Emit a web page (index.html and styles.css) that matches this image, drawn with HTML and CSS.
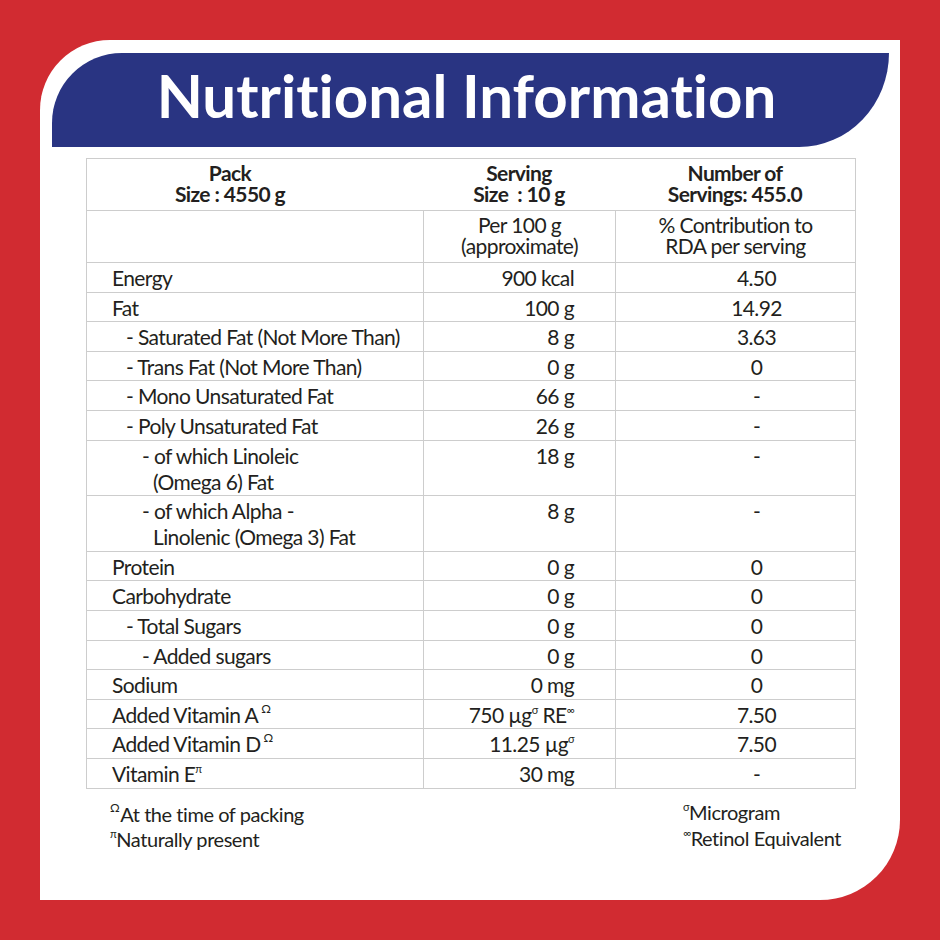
FILE: index.html
```html
<!DOCTYPE html>
<html lang="en">
<head>
<meta charset="utf-8">
<title>Nutritional Information</title>
<link rel="stylesheet" href="styles.css">
</head>
<body>
<div class="page">
  <div class="card">
    <div class="banner"><h1 class="title">Nutritional Information</h1></div>
    <div class="table">
      <div class="row head">
        <div class="cell c1 hc1">Pack<br>Size : 4550 g</div>
        <div class="cell c2 hc">Serving<br>Size&nbsp; : 10 g</div>
        <div class="cell c3 hc">Number of<br>Servings: 455.0</div>
      </div>
      <div class="row sub">
        <div class="cell c1"></div>
        <div class="cell c2 b hc">Per 100 g<br>(approximate)</div>
        <div class="cell c3 b hc">% Contribution to<br>RDA per serving</div>
      </div>
      <div class="row"><div class="cell c1 l0">Energy</div><div class="cell c2 b v">900 kcal</div><div class="cell c3 b p">4.50</div></div>
      <div class="row"><div class="cell c1 l0">Fat</div><div class="cell c2 b v">100 g</div><div class="cell c3 b p">14.92</div></div>
      <div class="row"><div class="cell c1 l1">- Saturated Fat (Not More Than)</div><div class="cell c2 b v">8 g</div><div class="cell c3 b p">3.63</div></div>
      <div class="row"><div class="cell c1 l1">- Trans Fat (Not More Than)</div><div class="cell c2 b v">0 g</div><div class="cell c3 b p">0</div></div>
      <div class="row"><div class="cell c1 l1">- Mono Unsaturated Fat</div><div class="cell c2 b v">66 g</div><div class="cell c3 b p">-</div></div>
      <div class="row"><div class="cell c1 l1">- Poly Unsaturated Fat</div><div class="cell c2 b v">26 g</div><div class="cell c3 b p">-</div></div>
      <div class="row"><div class="cell c1 l2">- of which Linoleic<br>(Omega 6) Fat</div><div class="cell c2 b v">18 g</div><div class="cell c3 b p">-</div></div>
      <div class="row"><div class="cell c1 l2">- of which Alpha -<br>Linolenic (Omega 3) Fat</div><div class="cell c2 b v">8 g</div><div class="cell c3 b p">-</div></div>
      <div class="row"><div class="cell c1 l0">Protein</div><div class="cell c2 b v">0 g</div><div class="cell c3 b p">0</div></div>
      <div class="row"><div class="cell c1 l0">Carbohydrate</div><div class="cell c2 b v">0 g</div><div class="cell c3 b p">0</div></div>
      <div class="row"><div class="cell c1 l1">- Total Sugars</div><div class="cell c2 b v">0 g</div><div class="cell c3 b p">0</div></div>
      <div class="row"><div class="cell c1 l2">- Added sugars</div><div class="cell c2 b v">0 g</div><div class="cell c3 b p">0</div></div>
      <div class="row"><div class="cell c1 l0">Sodium</div><div class="cell c2 b v">0 mg</div><div class="cell c3 b p">0</div></div>
      <div class="row"><div class="cell c1 l0">Added Vitamin A<sup class="om">Ω</sup></div><div class="cell c2 b v">750 µg<sup class="sm">σ</sup> RE<sup class="sm">∞</sup></div><div class="cell c3 b p">7.50</div></div>
      <div class="row"><div class="cell c1 l0">Added Vitamin D<sup class="om">Ω</sup></div><div class="cell c2 b v">11.25 µg<sup class="sm">σ</sup></div><div class="cell c3 b p">7.50</div></div>
      <div class="row last"><div class="cell c1 l0">Vitamin E<sup class="sm">π</sup></div><div class="cell c2 b v">30 mg</div><div class="cell c3 b p">-</div></div>
    </div>
    <div class="notes">
      <div class="note-left">
        <div><sup class="om">Ω</sup>At the time of packing</div>
        <div><sup class="sm">π</sup>Naturally present</div>
      </div>
      <div class="note-right">
        <div><sup class="sm">σ</sup>Microgram</div>
        <div><sup class="sm">∞</sup>Retinol Equivalent</div>
      </div>
    </div>
  </div>
</div>
</body>
</html>
```

FILE: styles.css
```css
html, body {
  margin: 0;
  padding: 0;
}
body {
  background: #d12b31;
  font-family: Lato, "Open Sans", sans-serif;
  color: #231f20;
  font-variant-ligatures: none;
}
.page {
  width: 940px;
  height: 940px;
  box-sizing: border-box;
  padding: 40px;
}
.card {
  width: 860px;
  height: 860px;
  background: #ffffff;
  border-radius: 70px 0 80px 0;
  overflow: hidden;
  padding-top: 13px;
  box-sizing: border-box;
}
.banner {
  margin: 0 11px 0 12px;
  height: 94px;
  background: #293482;
  border-radius: 70px 0 90px 0 / 70px 0 94px 0;
  display: flex;
  align-items: center;
  justify-content: center;
  padding-bottom: 10px;
  box-sizing: border-box;
}
.title {
  margin: 0;
  color: #ffffff;
  font-size: 60px;
  font-weight: 700;
  line-height: 72px;
  letter-spacing: 0;
  padding-right: 8px;
  font-variant-ligatures: none;
}
.table {
  margin: 11px 0 0 46px;
  width: 770px;
  box-sizing: border-box;
  border: 1px solid #cdcdcd;
  font-size: 21px;
}
.row {
  display: grid;
  grid-template-columns: 336px 192px 240px;
  border-bottom: 1px solid #cdcdcd;
}
.row.last {
  border-bottom: none;
}
.cell {
  box-sizing: border-box;
  line-height: 26px;
  padding: 2px 0 0.6px 0;
  letter-spacing: -0.6px;
}
.cell.b {
  border-left: 1px solid #cdcdcd;
}
.head .cell, .sub .cell {
  line-height: 21px;
  padding: 3px 0 6px 0;
}
.head .cell {
  font-weight: 700;
}
.hc {
  text-align: center;
}
.hc1 {
  text-align: center;
  padding-right: 50px !important;
}
.l0 {
  padding-left: 25px;
}
.l1 {
  padding-left: 50px;
  text-indent: -11px;
}
.l2 {
  padding-left: 66px;
  text-indent: -11px;
}
.v {
  text-align: right;
  padding-right: 41px;
}
.p {
  text-align: center;
  padding-left: 42px;
}
sup {
  line-height: 0;
  vertical-align: 0;
  position: relative;
}
.om {
  font-size: 12px;
  top: -10px;
  margin-left: 3px;
}
.sm {
  font-size: 11px;
  top: -9px;
}
.notes {
  display: flex;
  justify-content: space-between;
  margin: 13px 0 0 46px;
  width: 770px;
  padding: 0 15px 0 24px;
  box-sizing: border-box;
  font-size: 20px;
  line-height: 25px;
  letter-spacing: -0.45px;
}
.note-left .om {
  margin-left: 0;
  margin-right: 1px;
}
.note-right {
  margin-top: -3px;
  line-height: 26px;
}
```
